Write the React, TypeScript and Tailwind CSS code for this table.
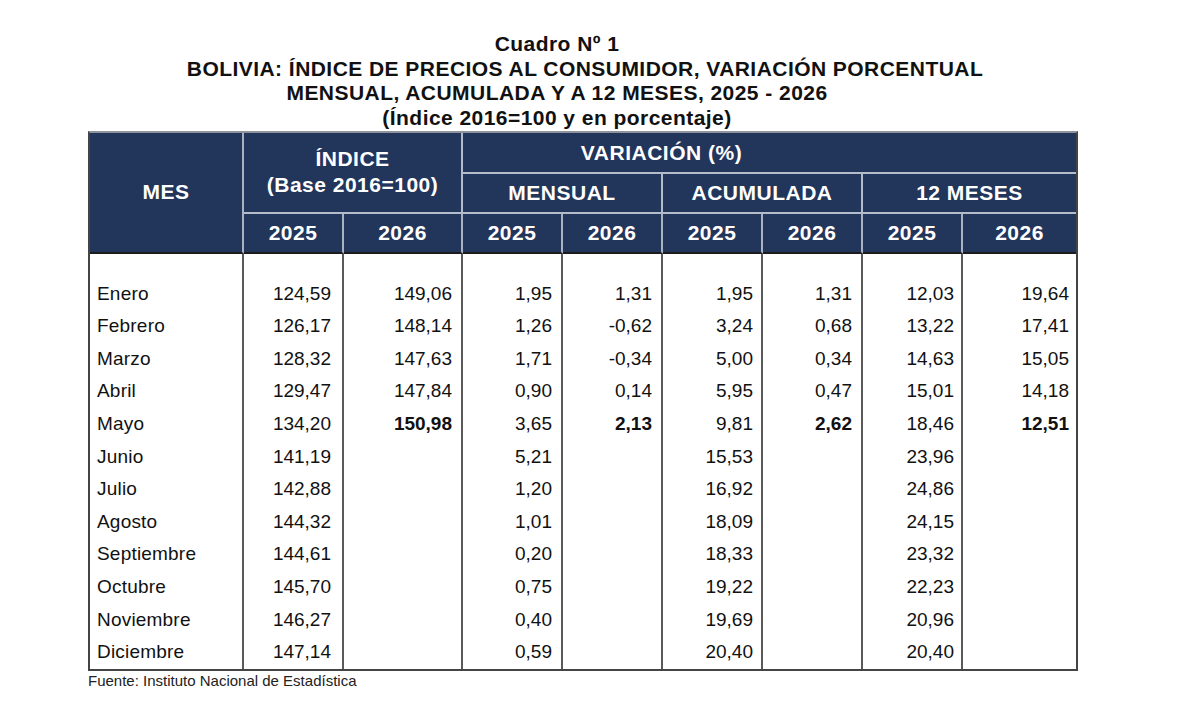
const rows: [string, string[], number[]][] = [
  ["Enero", ["124,59", "149,06", "1,95", "1,31", "1,95", "1,31", "12,03", "19,64"], []],
  ["Febrero", ["126,17", "148,14", "1,26", "-0,62", "3,24", "0,68", "13,22", "17,41"], []],
  ["Marzo", ["128,32", "147,63", "1,71", "-0,34", "5,00", "0,34", "14,63", "15,05"], []],
  ["Abril", ["129,47", "147,84", "0,90", "0,14", "5,95", "0,47", "15,01", "14,18"], []],
  ["Mayo", ["134,20", "150,98", "3,65", "2,13", "9,81", "2,62", "18,46", "12,51"], [1, 3, 5, 7]],
  ["Junio", ["141,19", "", "5,21", "", "15,53", "", "23,96", ""], []],
  ["Julio", ["142,88", "", "1,20", "", "16,92", "", "24,86", ""], []],
  ["Agosto", ["144,32", "", "1,01", "", "18,09", "", "24,15", ""], []],
  ["Septiembre", ["144,61", "", "0,20", "", "18,33", "", "23,32", ""], []],
  ["Octubre", ["145,70", "", "0,75", "", "19,22", "", "22,23", ""], []],
  ["Noviembre", ["146,27", "", "0,40", "", "19,69", "", "20,96", ""], []],
  ["Diciembre", ["147,14", "", "0,59", "", "20,40", "", "20,40", ""], []],
];

// right padding of each numeric column, so the figures end where the scan puts them
const padRight = ["pr-[11px]", "pr-[9px]", "pr-[9px]", "pr-[9px]", "pr-[8px]", "pr-[9px]", "pr-[7px]", "pr-[7px]"];

const cols = "grid grid-cols-[154px_100px_119px_100px_100px_100px_100px_100px_113px]";
const years = ["2025", "2026", "2025", "2026", "2025", "2026", "2025", "2026"];

export default function App() {
  return (
    <div className="w-[1179px] h-[709px] bg-white font-['Liberation_Sans',Arial,sans-serif] text-[#111]">
      <div className="ml-[88px] w-[990px] pt-[32px] text-center text-[21px] font-bold leading-[24.67px] tracking-[0.45px]">
        <div className="pr-[52px]">Cuadro Nº 1</div>
        <div className="pl-[4px]">BOLIVIA: ÍNDICE DE PRECIOS AL CONSUMIDOR, VARIACIÓN PORCENTUAL</div>
        <div className="pr-[52px]">MENSUAL, ACUMULADA Y A 12 MESES, 2025 - 2026</div>
        <div className="pr-[52px]">(Índice 2016=100 y en porcentaje)</div>
      </div>

      <div className="ml-[88px] w-[990px] border-x-2 border-b-2 border-t-2 border-x-[#444] border-b-[#444] border-t-[#8e939c]">
        <div className={`${cols} grid-rows-[41px_40px_40px] bg-[#22355b] text-white text-[21px] font-bold tracking-[0.5px]`}>
          <div className="row-span-3 flex items-center justify-center border-r-2 border-b-2 border-r-[#aab2c2] border-b-[#1c1c1c]">
            MES
          </div>
          <div className="col-span-2 row-span-2 flex flex-col items-center justify-center leading-[26px] border-r-2 border-b-2 border-[#b4bccb]">
            <span>ÍNDICE</span>
            <span>(Base 2016=100)</span>
          </div>
          <div className="col-span-6 flex items-center justify-center pr-[216px] pt-[2px] border-b-2 border-[#b4bccb]">
            VARIACIÓN (%)
          </div>
          <div className="col-span-2 flex items-center justify-center border-r-2 border-b-2 border-[#b4bccb]">
            MENSUAL
          </div>
          <div className="col-span-2 flex items-center justify-center border-r-2 border-b-2 border-[#b4bccb]">
            ACUMULADA
          </div>
          <div className="col-span-2 flex items-center justify-center border-b-2 border-[#b4bccb]">
            12 MESES
          </div>
          {years.map((y, i) => (
            <div
              key={i}
              className={`flex items-center justify-center border-b-2 border-b-[#1c1c1c] ${
                i < 7 ? "border-r-2 border-r-[#aab2c2]" : ""
              }`}
            >
              {y}
            </div>
          ))}
        </div>

        <div className={`${cols} text-[19px] leading-[32.6px]`}>
          {Array.from({ length: 9 }).map((_, i) => (
            <div key={i} className={`h-[24px] ${i < 8 ? "border-r-2 border-[#5a5a5a]" : ""}`} />
          ))}
          {rows.map(([mes, vals, bold]) => (
            <div key={mes} className="contents">
              <div className="h-[32.6px] pl-[7px] tracking-[0.2px] border-r-2 border-[#5a5a5a]">{mes}</div>
              {vals.map((v, i) => (
                <div
                  key={i}
                  className={`h-[32.6px] text-right ${padRight[i]} ${i < 7 ? "border-r-2 border-[#5a5a5a]" : ""} ${
                    bold.includes(i) ? "font-bold" : ""
                  }`}
                >
                  {v}
                </div>
              ))}
            </div>
          ))}
        </div>
      </div>

      <div className="ml-[88px] mt-[1px] text-[15px] leading-[18px] text-[#222]">
        Fuente: Instituto Nacional de Estadística
      </div>
    </div>
  );
}
